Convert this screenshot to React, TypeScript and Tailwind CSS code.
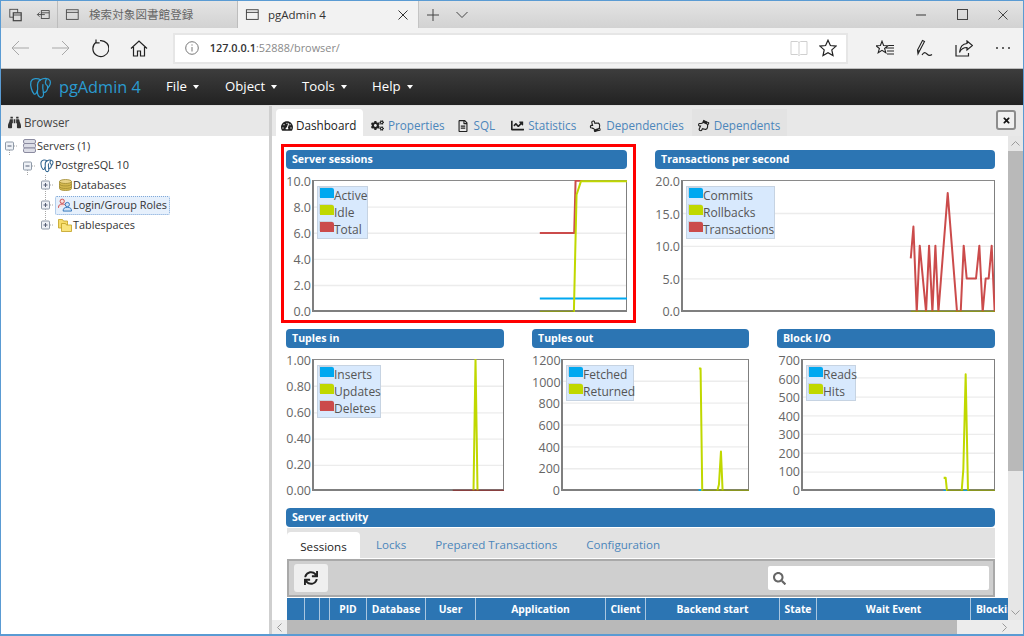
import React from "react";
import { FaBinoculars, FaTachometerAlt, FaCogs, FaRegFileAlt, FaChartLine, FaRegHandPointUp, FaRegHandPointDown, FaTimes, FaSearch, FaSync } from "react-icons/fa";

const Ico = ({ w = 16, h = 16, vb = "0 0 16 16", className = "", children }: { w?: number; h?: number; vb?: string; className?: string; children: React.ReactNode }) => (
  <svg width={w} height={h} viewBox={vb} fill="none" stroke="currentColor" strokeWidth={1} className={className}>
    {children}
  </svg>
);

const Elephant = ({ size, className = "", sw = 1.6 }: { size: number; className?: string; sw?: number }) => (
  <svg width={size} height={size} viewBox="0 0 24 24" fill="none" stroke="currentColor" strokeWidth={sw} strokeLinecap="round" strokeLinejoin="round" className={className}>
    <path d="M12 4C9 2 3.500 2 2 6C1 10 3 16 5 18.500C6.500 20 8 18 8.800 15" />
    <path d="M12 4C10 5 8.500 8 9 12C9.200 14 8.800 15 8.800 15C8.500 18 9.500 22.500 12.500 22.500C15 22.500 15.500 19.500 15 17C14.500 14.500 14 12 14.500 9" />
    <path d="M12 4C15 2 20 1.500 22 5C23 8 21 11 19.500 12.500C19 15.500 17.500 17.500 15 17" />
    <path d="M18 3.500C16.500 6.500 17.500 9 19 10C19.500 11 19.500 12 19.500 12.500" />
  </svg>
);

type Series = { color: string; points: string; width?: number };
type ChartProps = {
  title: string;
  labels: string[];
  labelWidth: string;
  vb: string;
  grid: [number, number, number][];
  series: Series[];
  legend: [string, string][];
  legendWidth: string;
  outlined?: boolean;
  className?: string;
};

const Header = ({ title }: { title: string }) => (
  <div className="h-[19px] rounded-[4px] bg-[#2c75b3] pl-[6px] text-[10.6px] leading-[19px] font-bold text-white">{title}</div>
);

const Chart = ({ title, labels, labelWidth, vb, grid, series, legend, legendWidth, outlined, className = "" }: ChartProps) => (
  <div className={"relative " + className}>
    {outlined && <div className="absolute -left-[5px] -top-[6px] h-[179px] w-[355px] border-[3px] border-[#ff0000]" />}
    <Header title={title} />
    <div className="mt-[11px] flex h-[132px]">
      <div className={"-mt-[4px] flex h-[142px] shrink-0 flex-col justify-between pr-[1px] text-right text-[12.5px] leading-[12px] text-[#666] " + labelWidth}>
        {labels.map((l) => (
          <div key={l}>{l}</div>
        ))}
      </div>
      <div className="relative min-w-0 flex-1 bg-white">
        <div className="absolute inset-0 border border-b-2 border-l-2 border-[#7f7f7f] border-t-[#8a8a8a]" />
        <svg className="absolute inset-0 h-full w-full" viewBox={vb} preserveAspectRatio="none">
          {grid.map(([y, x1, x2]) => (
            <line key={y} x1={x1 + 6} x2={x2 - 3} y1={y} y2={y} stroke="#ececec" strokeWidth={4} />
          ))}
          {series.map((s, i) => (
            <polyline key={i} points={s.points} fill="none" stroke={s.color} strokeWidth={s.width ?? 6} strokeLinejoin="round" />
          ))}
        </svg>
        <div className={"absolute left-[5px] top-[5.5px] border border-[#c6d3e2] bg-[#d8e9fd] pl-[2px] text-[12px] leading-[17px] text-[#555] " + legendWidth}>
          {legend.map(([name, color]) => (
            <div key={name} className="flex h-[17px] items-start">
              <span className="mt-[1px] h-[10px] w-[14px] shrink-0 rounded-tr-[2px] shadow-[-1px_-1px_0_#c9d3de]" style={{ backgroundColor: color }} />
              <span className="whitespace-nowrap">{name}</span>
            </div>
          ))}
        </div>
      </div>
    </div>
  </div>
);

const BLUE = "#00a8f0";
const LIME = "#c0d800";
const RED = "#cb4b4b";
const OLIVE = "#8e9e00";

const TreeExp = ({ minus, up, down }: { minus?: boolean; up?: boolean; down?: boolean }) => (
  <svg width={17} height={20} viewBox="0 0 17 20" className="shrink-0">
    {up && <line x1={8.5} x2={8.5} y1={0} y2={6} stroke="#a8a8a8" strokeDasharray="1 1" />}
    {down && <line x1={8.5} x2={8.5} y1={14} y2={20} stroke="#a8a8a8" strokeDasharray="1 1" />}
    <line x1={13} x2={17} y1={10} y2={10} stroke="#a8a8a8" strokeDasharray="1 1" />
    <rect x={4.5} y={6} width={8} height={8} rx={1} fill="#eef1f6" stroke="#8f9aa8" />
    <line x1={6.5} x2={10.5} y1={10} y2={10} stroke="#555f75" />
    {!minus && <line x1={8.5} x2={8.5} y1={8} y2={12} stroke="#555f75" />}
  </svg>
);

const TreeRow = ({ indent, minus, up, down, icon, label, selected }: { indent: string; minus?: boolean; up?: boolean; down?: boolean; icon: React.ReactNode; label: string; selected?: boolean }) => (
  <div className={"flex h-[19.75px] items-center " + indent}>
    <TreeExp minus={minus} up={up} down={down} />
    <div className={"ml-[1px] flex h-[19px] items-center gap-[1px] rounded-[2px] border px-[2px] whitespace-nowrap " + (selected ? "border-dotted border-[#7fa8d8] bg-[#e6f0fc]" : "border-transparent")}>
      <span className="flex w-[14px] justify-center">{icon}</span>
      <span className="text-[10.9px] text-[#333]">{label}</span>
    </div>
  </div>
);

const TabLink = ({ icon, label, className = "" }: { icon: React.ReactNode; label: string; className?: string }) => (
  <div className={"flex h-[27px] items-center gap-[4px] pt-[6px] whitespace-nowrap text-[11.7px] text-[#4c86bb] " + className}>
    <span className="flex w-[14px] justify-center text-[#222]">{icon}</span>
    {label}
  </div>
);

const cols: [string, string][] = [
  ["", "w-[18px]"],
  ["", "w-[15px]"],
  ["", "w-[10px]"],
  ["PID", "w-[37px]"],
  ["Database", "w-[59px]"],
  ["User", "w-[50px]"],
  ["Application", "w-[130px]"],
  ["Client", "w-[40px]"],
  ["Backend start", "w-[134px]"],
  ["State", "w-[37px]"],
  ["Wait Event", "w-[154px]"],
  ["Blocking PIDs", "w-[80px]"],
];

export default function App() {
  return (
    <div className="flex h-[636px] w-[1024px] flex-col overflow-hidden border-x border-t border-b-2 border-[#5a9bd3] bg-white font-['Open_Sans','Noto_Sans',sans-serif]">
      {/* title bar */}
      <div className="flex h-[27px] shrink-0 items-stretch bg-gradient-to-b from-[#e4e4e4] to-[#d2d2d2] text-[#444]">
        <div className="flex w-[57px] items-center border-r border-[#bdbdbd]">
          <div className="flex w-[29px] justify-center">
            <Ico w={15} h={14}>
              <rect x="1.5" y="1.5" width="9" height="9" />
              <rect x="5.5" y="5.5" width="9" height="9" fill="#dcdcdc" strokeWidth={1.4} />
              <path d="M5.5 8h9" />
            </Ico>
          </div>
          <div className="flex w-[28px] justify-center">
            <Ico w={15} h={14}>
              <rect x="5.5" y="3" width="9" height="9" />
              <path d="M9.5 7.5H1M3.5 5L1 7.5 3.5 10M5.5 5.5h9" />
            </Ico>
          </div>
        </div>
        <div className="flex w-[180px] items-center gap-[9px] border-r border-[#bdbdbd] pl-[7px]">
          <Ico w={15} h={14}>
            <rect x="1" y="2" width="13.5" height="11" />
            <path d="M1 5h13.5" />
          </Ico>
          <span className="font-['Noto_Sans_CJK_JP',sans-serif] text-[11.5px] tracking-[0.1px] whitespace-nowrap text-[#666]">検索対象図書館登録</span>
        </div>
        <div className="flex w-[180px] items-center bg-[#f2f2f2] pl-[7px] text-[#333]">
          <Ico w={15} h={14}>
            <rect x="1" y="2" width="13.5" height="11" />
            <path d="M1 5h13.5" />
          </Ico>
          <span className="ml-[8px] flex-1 text-[11.5px] whitespace-nowrap">pgAdmin 4</span>
          <Ico w={10} h={10} vb="0 0 10 10" className="mr-[10px]">
            <path d="M.5.5l9 9M9.5.5l-9 9" />
          </Ico>
        </div>
        <div className="flex w-[59px] items-center border-l border-[#c4c4c4] pl-[8px]">
          <Ico w={12} h={12} vb="0 0 12 12">
            <path d="M6 0v12M0 6h12" />
          </Ico>
          <Ico w={12} h={8} vb="0 0 12 8" className="ml-[17px]">
            <path d="M.5 1l5.5 5.5L11.5 1" />
          </Ico>
        </div>
        <div className="flex flex-1 items-center justify-end">
          <Ico w={10} h={2} vb="0 0 10 2" className="mr-[31px] text-[#666]">
            <path d="M0 1h10" strokeWidth={1.4} />
          </Ico>
          <Ico w={11} h={11} vb="0 0 11 11" className="mr-[30px]">
            <rect x=".5" y=".5" width="10" height="10" />
          </Ico>
          <Ico w={10} h={10} vb="0 0 10 10" className="mr-[15px]">
            <path d="M.5.5l9 9M9.5.5l-9 9" />
          </Ico>
        </div>
      </div>
      {/* address bar */}
      <div className="flex h-[41px] shrink-0 items-center border-b border-[#bdbdbd] bg-[#f2f2f2]">
        <div className="flex w-[39.5px] justify-center text-[#a8a8a8]">
          <Ico w={19} h={16} vb="0 0 19 16"><path d="M18 8H1M8 1L1 8l7 7" /></Ico>
        </div>
        <div className="flex w-[39.5px] justify-center text-[#a8a8a8]">
          <Ico w={19} h={16} vb="0 0 19 16"><path d="M1 8h17M11 1l7 7-7 7" /></Ico>
        </div>
        <div className="flex w-[39.5px] justify-center text-[#222]">
          <Ico w={19} h={19} vb="0 0 19 19"><path d="M6 3.2A8 8 0 1 0 10 1.6M6 .5v3.4h3.6" strokeWidth={1.2} /></Ico>
        </div>
        <div className="flex w-[39.5px] justify-center text-[#222]">
          <Ico w={18} h={17} vb="0 0 18 17"><path d="M1 8.5L9 1l8 7.5M3.5 7v9h4v-5h3v5h4V7" strokeWidth={1.2} /></Ico>
        </div>
        <div className="ml-[14px] flex h-[31px] w-[677px] items-center border-2 border-[#e6e6e6] bg-white">
          <Ico w={14} h={14} vb="0 0 14 14" className="ml-[10px] text-[#777]">
            <circle cx="7" cy="7" r="6.3" />
            <path d="M7 6v4.5M7 3.4v1.2" />
          </Ico>
          <span className="ml-[11px] text-[10.9px] whitespace-nowrap font-semibold text-[#333]">
            127.0.0.1<span className="font-normal text-[#8a8a8a]">:52888/browser/</span>
          </span>
          <div className="ml-auto flex items-center">
            <Ico w={18} h={16} vb="0 0 18 16" className="text-[#cfcfcf]">
              <path d="M1 1.5h6.5l1.5 1 1.5-1H17v13h-6.5l-1.5 1-1.5-1H1zM9 2.5v12" />
            </Ico>
            <Ico w={18} h={18} vb="0 0 18 18" className="mr-[9px] ml-[11px] text-[#222]">
              <path d="M9 1.2l2.4 5.3 5.7.6-4.3 3.8 1.2 5.7L9 13.7l-5 2.9 1.2-5.7L.9 7.100l5.700-.6z" strokeWidth={1.2} />
            </Ico>
          </div>
        </div>
        <div className="ml-[17px] flex w-[39.5px] justify-center text-[#222]">
          <Ico w={18} h={17} vb="0 0 18 17">
            <path d="M6 1.200l1.600 4.300 4.400.2-3.400 2.800 1.200 4.200L6 10.300l-3.800 2.400 1.200-4.200L0 5.700l4.400-.2zM10 8h8M11 11h7M12.500 5.500h5.500M11 14h7" strokeWidth={1.1} />
          </Ico>
        </div>
        <div className="flex w-[39.5px] justify-center text-[#222]">
          <Ico w={17} h={18} vb="0 0 17 18">
            <path d="M2 15L1.500 11 6.500 1.500 8.500 2.500 3.500 12zM1.800 11.500l1.700 .7M6 16c2-3.500 3.500-2.500 5-1s3 2 5 .5" strokeWidth={1.1} />
          </Ico>
        </div>
        <div className="flex w-[39.5px] justify-center text-[#222]">
          <Ico w={18} h={17} vb="0 0 18 17">
            <path d="M1 5v11h12.500v-3M12 1l5.500 4.500L12 10V7.500C8 7.500 6 9 4.500 12.500 5 7.500 7.500 3.700 12 3.500z" strokeWidth={1.2} />
          </Ico>
        </div>
        <div className="flex w-[39.5px] justify-center gap-[4px]">
          <span className="size-[2px] rounded-full bg-[#333]" />
          <span className="size-[2px] rounded-full bg-[#333]" />
          <span className="size-[2px] rounded-full bg-[#333]" />
        </div>
      </div>
      {/* app nav */}
      <div className="flex h-[36px] shrink-0 items-center bg-gradient-to-b from-[#3d3d3d] to-[#222] text-[13.2px] text-white">
        <Elephant size={23} className="ml-[28px] text-[#2a9bd0]" sw={1.3} />
        <span className="ml-[7px] w-[107px] text-[16.3px] text-[#2a9bd0]">pgAdmin 4</span>
        {[
          ["File", "w-[59px]"],
          ["Object", "w-[77px]"],
          ["Tools", "w-[70px]"],
          ["Help", "w-[60px]"],
        ].map(([t, w]) => (
          <div key={t} className={"flex items-center " + w}>
            {t}
            <span className="ml-[6px] h-0 w-0 border-x-[3.500px] border-t-[4px] border-x-transparent border-t-white" />
          </div>
        ))}
      </div>
      {/* main */}
      <div className="flex min-h-0 flex-1 border-t border-[#e0e0e0]">
        {/* left */}
        <div className="w-[268px] shrink-0 overflow-hidden">
          <div className="flex h-[30px] items-center gap-[3px] bg-[#e8e8e8] pt-[3px] pl-[7px] text-[11.7px] text-[#444]">
            <FaBinoculars size={13} className="text-[#333]" />
            Browser
          </div>
          <TreeRow indent="pl-[0px]" minus down icon={
            <svg width="13" height="14" viewBox="0 0 13 14" fill="#dcdde6" stroke="#8b8ba0">
              <rect x=".5" y=".5" width="12" height="4" rx="1.500" />
              <rect x=".5" y="4.500" width="12" height="4.500" rx="1.500" />
              <rect x=".5" y="9" width="12" height="4.500" rx="1.500" />
            </svg>
          } label="Servers (1)" />
          <TreeRow indent="pl-[18px]" minus down icon={<Elephant size={15} className="text-[#336791]" sw={1.8} />} label="PostgreSQL 10" />
          <TreeRow indent="pl-[36px]" up down icon={
            <svg width="13" height="12" viewBox="0 0 13 12" fill="#d4b84f" stroke="#a08a30" strokeWidth=".8">
              <path d="M.5 2.500v7c0 2.700 12 2.700 12 0v-7" />
              <ellipse cx="6.500" cy="2.500" rx="6" ry="2" fill="#ead489" />
              <path d="M.5 5c0 2.600 12 2.600 12 0M.5 7.500c0 2.600 12 2.600 12 0" fill="none" />
            </svg>
          } label="Databases" />
          <TreeRow indent="pl-[36px]" up down selected icon={
            <svg width="15" height="14" viewBox="0 0 15 14" fill="none" strokeWidth="1">
              <circle cx="4.500" cy="3" r="2.300" stroke="#cb4b4b" fill="#f7dede" />
              <path d="M.5 10c0-3 1.500-4 4-4s3 .6 3.500 1.500" stroke="#cb4b4b" fill="#f7dede" />
              <circle cx="10" cy="6.500" r="2.300" stroke="#2f72b8" fill="#cfe2f7" />
              <path d="M5.500 13.500c0-3 1.500-4 4.500-4s4.500 1 4.500 4z" stroke="#2f72b8" fill="#cfe2f7" />
            </svg>
          } label="Login/Group Roles" />
          <TreeRow indent="pl-[36px]" up icon={
            <svg width="14" height="14" viewBox="0 0 14 14" stroke="#c0a020" strokeWidth=".8">
              <path d="M.5 1.500h4l1 1.500h4v7h-9z" fill="#f6dc6a" />
              <path d="M3.500 5.500h4l1 1.500h5v6.500h-10z" fill="#f9e47c" />
            </svg>
          } label="Tablespaces" />
        </div>
        <div className="w-[3px] shrink-0 bg-[#cfcfcf]" />
        {/* right */}
        <div className="flex min-w-0 flex-1 flex-col">
          <div className="flex h-[30px] shrink-0 items-end bg-[#e8e8e8] pl-[4px]">
            <div className="flex h-[27px] w-[87px] items-center gap-[2px] rounded-t-[4px] bg-white pt-[6px] pl-[4px] text-[11.7px] whitespace-nowrap text-[#222]">
              <span className="flex w-[14px] justify-center"><FaTachometerAlt size={12} /></span>
              Dashboard
            </div>
            <TabLink className="ml-[7px]" icon={<FaCogs size={13} />} label="Properties" />
            <TabLink className="ml-[11px]" icon={<FaRegFileAlt size={12} />} label="SQL" />
            <TabLink className="ml-[15px]" icon={<FaChartLine size={13} />} label="Statistics" />
            <TabLink className="ml-[12px]" icon={<FaRegHandPointUp size={12} className="-rotate-[15deg]" />} label="Dependencies" />
            <TabLink className="ml-[8px] bg-[#e3e3e3] pr-[7px] pl-[4px]" icon={<FaRegHandPointDown size={12} className="rotate-[25deg]" />} label="Dependents" />
            <div className="mb-[6px] ml-auto mr-[7px] flex h-[20px] w-[20px] items-center justify-center self-end rounded-[3px] border-2 border-[#8c8c8c] bg-[#f0f0f0] text-[#111]">
              <FaTimes size={9} />
            </div>
          </div>
          <div className="flex min-h-0 flex-1">
            <div className="min-w-0 flex-1 overflow-hidden pt-[14px] pl-[14px]">
              <div className="w-[709px]">
                <div className="flex h-[179px] justify-between">
                  <Chart outlined className="w-[341px]" title="Server sessions" labels={["10.0", "8.0", "6.0", "4.0", "2.0", "0.0"]} labelWidth="w-[26px]" vb="120 226 943 394"
                    grid={[[307, 120, 1063], [385, 120, 1063], [463, 120, 1063], [541, 120, 1063]]}
                    series={[
                      { color: RED, points: "802,384 905,384 909,228 930,228" },
                      { color: BLUE, points: "802,580 1063,580" },
                      { color: LIME, points: "904,620 912,270 925,230 1063,230" },
                      { color: OLIVE, points: "802,618 904,618", width: 3 },
                    ]}
                    legend={[["Active", BLUE], ["Idle", LIME], ["Total", RED]]} legendWidth="w-[51px]" />
                  <Chart className="w-[340px]" title="Transactions per second" labels={["20.0", "15.0", "10.0", "5.0", "0.0"]} labelWidth="w-[26px]" vb="107 226 943 394"
                    grid={[[326, 107, 1050], [424, 107, 1050], [521, 107, 1050]]}
                    series={[
                      { color: RED, points: "797,460 805,365 815,620 824,422 843,620 852,422 862,620 871,422 880,620 908,265 936,620 947,620 956,422 965,520 993,520 1003,422 1013,620 1022,520 1031,520 1040,422 1049,620" },
                      { color: OLIVE, points: "797,618 1050,618", width: 3 },
                    ]}
                    legend={[["Commits", BLUE], ["Rollbacks", LIME], ["Transactions", RED]]} legendWidth="w-[89px]" />
                </div>
                <div className="flex h-[179px] justify-between">
                  <Chart className="w-[218px]" title="Tuples in" labels={["1.00", "0.80", "0.60", "0.40", "0.20", "0.00"]} labelWidth="w-[26px]" vb="112 102 573 392"
                    grid={[[183, 112, 685], [262, 112, 685], [340, 112, 685], [418, 112, 685]]}
                    series={[
                      { color: LIME, points: "594,494 600,102 606,494" },
                      { color: "#8b2a2a", points: "532,492 685,492", width: 3 },
                    ]}
                    legend={[["Inserts", BLUE], ["Updates", LIME], ["Deletes", RED]]} legendWidth="w-[64px]" />
                  <Chart className="w-[217px]" title="Tuples out" labels={["1200", "1000", "800", "600", "400", "200", "0"]} labelWidth="w-[29px]" vb="860 102 563 392"
                    grid={[[168, 860, 1423], [233, 860, 1423], [298, 860, 1423], [363, 860, 1423], [428, 860, 1423]]}
                    series={[
                      { color: LIME, points: "1273,130 1278,130 1283,494" },
                      { color: LIME, points: "1328,494 1333,475 1339,377 1344,494" },
                      { color: OLIVE, points: "1283,492 1423,492", width: 3 },
                      { color: BLUE, points: "1272,491 1280,491", width: 6 },
                    ]}
                    legend={[["Fetched", BLUE], ["Returned", LIME]]} legendWidth="w-[68px]" />
                  <Chart className="w-[218px]" title="Block I/O" labels={["700", "600", "500", "400", "300", "200", "100", "0"]} labelWidth="w-[24px]" vb="453 102 582 392"
                    grid={[[158, 453, 1035], [215, 453, 1035], [271, 453, 1035], [326, 453, 1035], [382, 453, 1035], [438, 453, 1035]]}
                    series={[
                      { color: LIME, points: "881,455 887,455 891,494" },
                      { color: LIME, points: "935,494 940,430 947,147 954,494" },
                      { color: OLIVE, points: "891,492 1035,492", width: 3 },
                      { color: BLUE, points: "880,492 888,492", width: 3 },
                      { color: BLUE, points: "940,492 952,492", width: 3 },
                    ]}
                    legend={[["Reads", BLUE], ["Hits", LIME]]} legendWidth="w-[50px]" />
                </div>
                <Header title="Server activity" />
                <div className="mt-[1px] ml-[1px] flex h-[30px] items-end bg-[#e2e2e2] text-[11.6px] text-[#4c86bb]">
                  <div className="flex h-[26px] w-[73px] items-center justify-center rounded-t-[4px] bg-white pt-[3px] text-[#222]">Sessions</div>
                  <div className="mb-[2px] ml-[16px] h-[20px]">Locks</div>
                  <div className="mb-[2px] ml-[29px] h-[20px]">Prepared Transactions</div>
                  <div className="mb-[2px] ml-[29px] h-[20px]">Configuration</div>
                </div>
                <div className="mt-[1px] ml-[1px] flex h-[38px] items-center border-2 border-[#a9a9a9] bg-[#cfcfcf] pr-[4px] pl-[5px]">
                  <div className="flex h-[28px] w-[34px] items-center justify-center rounded-[3px] bg-[#efefef] text-[#222]">
                    <FaSync size={14} />
                  </div>
                  <div className="ml-auto flex h-[24px] w-[221px] items-center rounded-[2px] bg-white pl-[5px] text-[#666]">
                    <FaSearch size={13} />
                  </div>
                </div>
              </div>
              <div className="mt-[1px] ml-[1px] flex h-[22px] w-[764px] bg-[#2c75b3] text-[10.3px] leading-[22px] font-bold text-white">
                {cols.map(([t, w], i) => (
                  <div key={i} className={"shrink-0 overflow-hidden border-r border-[#a9c6e0] text-center whitespace-nowrap " + w}>{t}</div>
                ))}
              </div>
            </div>
            {/* vertical scrollbar */}
            <div className="flex w-[15px] shrink-0 flex-col bg-[#e6e6e6] text-[#9a9a9a]">
              <div className="flex h-[15px] items-center justify-center">
                <Ico w={9} h={5} vb="0 0 9 5"><path d="M.5 4.500L4.500.5l4 4" /></Ico>
              </div>
              <div className="h-[320px] bg-[#b9b9b9]" />
              <div className="mt-auto flex h-[15px] items-center justify-center">
                <Ico w={9} h={5} vb="0 0 9 5"><path d="M.5.5l4 4 4-4" /></Ico>
              </div>
            </div>
          </div>
          {/* horizontal scrollbar */}
          <div className="flex h-[14px] shrink-0 items-stretch bg-[#ececec] text-[#9a9a9a]">
            <div className="flex w-[15px] items-center justify-center">
              <Ico w={5} h={9} vb="0 0 5 9"><path d="M4.500.5l-4 4 4 4" /></Ico>
            </div>
            <div className="w-[670px] bg-[#b9b9b9]" />
            <div className="ml-auto flex w-[37px] items-center justify-center">
              <Ico w={5} h={9} vb="0 0 5 9"><path d="M.5.5l4 4-4 4" /></Ico>
            </div>
          </div>
        </div>
      </div>
    </div>
  );
}
